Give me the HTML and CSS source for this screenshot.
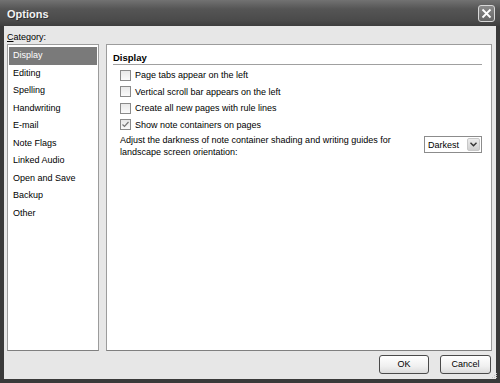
FILE: index.html
```html
<html>
    <head>
        <title>Options</title>
        <link rel="stylesheet" href="styles.css">
    </head>
    <body>
        <div class="window">
            <div class="titlebar">
                <span class="title">Options</span>
                <div class="close-btn">
                    <svg width="11" height="11" viewBox="0 0 11 11">
                        <path d="M1.5 1.5 L9.5 9.5 M9.5 1.5 L1.5 9.5" stroke="#fff" stroke-width="1.8" fill="none"/>
                    </svg>
                </div>
            </div>
            <div class="client">
                <div class="category-label"><u>C</u>ategory:</div>
                <div class="panes">
                    <div class="category-list">
                        <div class="item selected">Display</div>
                        <div class="item">Editing</div>
                        <div class="item">Spelling</div>
                        <div class="item">Handwriting</div>
                        <div class="item">E-mail</div>
                        <div class="item">Note Flags</div>
                        <div class="item">Linked Audio</div>
                        <div class="item">Open and Save</div>
                        <div class="item">Backup</div>
                        <div class="item">Other</div>
                    </div>
                    <div class="page">
                        <div class="page-heading">Display</div>
                        <div class="option">
                            <span class="checkbox"></span>
                            <span>Page tabs appear on the left</span>
                        </div>
                        <div class="option">
                            <span class="checkbox"></span>
                            <span>Vertical scroll bar appears on the left</span>
                        </div>
                        <div class="option">
                            <span class="checkbox"></span>
                            <span>Create all new pages with rule lines</span>
                        </div>
                        <div class="option">
                            <span class="checkbox">
                                <svg width="9" height="9" viewBox="0 0 9 9">
                                    <path d="M1.5 4.5 L3.5 6.5 L7.5 2" stroke="#777" stroke-width="1.2" fill="none"/>
                                </svg>
                            </span>
                            <span>Show note containers on pages</span>
                        </div>
                        <div class="darkness-row">
                            <div class="darkness-text">Adjust the darkness of note container shading and writing guides for<br>landscape screen orientation:</div>
                            <div class="dropdown">
                                <span class="dropdown-value">Darkest</span>
                                <span class="dropdown-arrow">
                                    <svg width="7" height="5" viewBox="0 0 7 5">
                                        <path d="M0.5 0.8 L3.5 3.8 L6.5 0.8" stroke="#333" stroke-width="1.4" fill="none"/>
                                    </svg>
                                </span>
                            </div>
                        </div>
                    </div>
                </div>
                <div class="buttons">
                    <div class="btn">OK</div>
                    <div class="btn">Cancel</div>
                </div>
            </div>
            <svg class="grip" width="7" height="7" viewBox="0 0 7 7">
                <rect x="5" y="1" width="1" height="1" fill="#c4c4c4"/>
                <rect x="3" y="3" width="1" height="1" fill="#c4c4c4"/>
                <rect x="5" y="3" width="1" height="1" fill="#c4c4c4"/>
                <rect x="1" y="5" width="1" height="1" fill="#c4c4c4"/>
                <rect x="3" y="5" width="1" height="1" fill="#c4c4c4"/>
                <rect x="5" y="5" width="1" height="1" fill="#c4c4c4"/>
            </svg>
        </div>
    </body>
</html>
```

FILE: styles.css
```css
body{
    margin: 0;
    font-family: "Liberation Sans", Arial, sans-serif;
    font-size: 9px;
    color: #000;
}
.window{
    position: relative;
    width: 500px;
    height: 383px;
    display: flex;
    flex-direction: column;
    background-color: #3a3a3a;
    box-sizing: border-box;
}
.titlebar{
    height: 26px;
    display: flex;
    align-items: center;
    justify-content: space-between;
    padding: 0 5px 0 7px;
    background: linear-gradient(#727272, #555555 35%, #4a4a4a 80%, #3e3e3e);
}
.title{
    font-size: 11px;
    font-weight: bold;
    color: #f2f2f2;
    text-shadow: 1px 1px 0 #333;
    margin-top: 1px;
}
.close-btn{
    width: 15px;
    height: 15px;
    border: 1px solid #d8d8d8;
    border-radius: 3px;
    background: linear-gradient(#8a8a8a, #666666);
    display: flex;
    align-items: center;
    justify-content: center;
    margin-top: 1px;
}
.client{
    flex: 1;
    margin: 0 4px 4px 4px;
    padding: 4px 4px 5px 3px;
    background-color: #e7e7e7;
    display: flex;
    flex-direction: column;
}
.category-label{
    height: 14px;
    line-height: 14px;
}
.panes{
    display: flex;
    gap: 7px;
    height: 307px;
}
.category-list{
    width: 92px;
    box-sizing: border-box;
    border: 1px solid #9c9c9c;
    border-bottom-color: #808080;
    background-color: #fff;
    padding: 2px 1px;
}
.item{
    height: 17.5px;
    line-height: 17px;
    padding-left: 4px;
}
.item.selected{
    background-color: #7a7a7a;
    color: #fff;
}
.page{
    flex: 1;
    border: 1px solid #9c9c9c;
    border-bottom-color: #808080;
    background-color: #fff;
    padding: 6px 9px 0 6px;
}
.page-heading{
    font-weight: bold;
    font-size: 9.5px;
    height: 13px;
    line-height: 13px;
    border-bottom: 1px solid #a0a0a0;
    margin-bottom: 2px;
}
.option{
    height: 16.5px;
    display: flex;
    align-items: center;
    padding-left: 7px;
}
.checkbox{
    width: 9px;
    height: 9px;
    border: 1px solid #8a8a8a;
    background: linear-gradient(#e8e8e8, #fafafa);
    margin-right: 4px;
    display: flex;
    align-items: center;
    justify-content: center;
}
.darkness-row{
    display: flex;
    justify-content: space-between;
    align-items: flex-start;
    padding-left: 7px;
    margin-top: 1px;
}
.darkness-text{
    line-height: 12px;
}
.dropdown{
    width: 58px;
    height: 17px;
    box-sizing: border-box;
    border: 1px solid #8c8c8c;
    background-color: #fff;
    display: flex;
    align-items: center;
    justify-content: space-between;
    padding: 0 1px 0 3px;
    margin-top: 2px;
}
.dropdown-arrow{
    width: 13px;
    height: 13px;
    box-sizing: border-box;
    border: 1px solid #c8c8c8;
    border-radius: 2px;
    background: linear-gradient(#ececec, #d0d0d0);
    display: flex;
    align-items: center;
    justify-content: center;
}
.buttons{
    display: flex;
    justify-content: flex-end;
    gap: 11px;
    margin-top: 4px;
    margin-right: 1px;
}
.btn{
    width: 48px;
    height: 17px;
    line-height: 17px;
    text-align: center;
    border: 1px solid #4a4a4a;
    border-radius: 3px;
    background: linear-gradient(#ffffff, #f0f0f0 60%, #dcdcdc);
}
.btn + .btn{
    width: 49px;
}
.grip{
    position: absolute;
    right: 2px;
    bottom: 4px;
}
```
